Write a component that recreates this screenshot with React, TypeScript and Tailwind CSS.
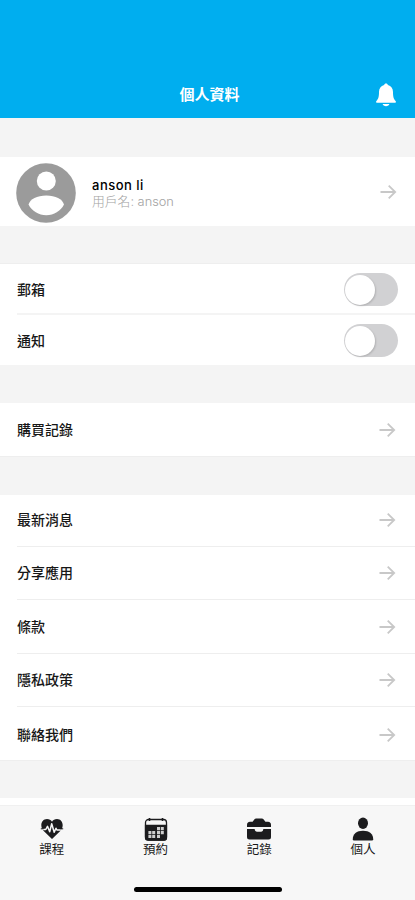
import React from 'react';

const menuItems = [
  { label: '最新消息', row: 'h-[51px] pb-[2px]' },
  { label: '分享應用', row: 'h-[52px]' },
  { label: '條款', row: 'h-[53px]' },
  { label: '隱私政策', row: 'h-[52px]' },
  { label: '聯絡我們', row: 'h-[53px] pt-[2px]' },
];

const ArrowIcon: React.FC = () => (
  <svg width="17" height="16" viewBox="0 0 17 16" fill="none" stroke="#c8c8c8" strokeWidth="1.8">
    <path d="M0.5 8H15M8.7 1.6L15.2 8L8.7 14.4" />
  </svg>
);

const BellIcon: React.FC = () => (
  <svg width="20" height="24" viewBox="0 0 20 24" fill="#fff">
    <path d="M10 .4C8.900.4 8.300 1 8.100 2 4.900 3 3 5.500 3 9c0 4.800-.6 6.800-2.600 9-.7.8-.2 1.800.7 1.800h17.800c.9 0 1.400-1 .7-1.800-2-2.200-2.600-4.200-2.600-9 0-3.500-1.900-6-5.100-7C11.700 1 11.100.4 10 .4z" />
    <path d="M6.600 21h6.800c-.4 1.400-1.700 2.200-3.400 2.200S7 22.400 6.600 21z" />
  </svg>
);

const Avatar: React.FC = () => (
  <svg width="60" height="60" viewBox="0 0 60 60">
    <circle cx="30" cy="30" r="29.800" fill="#9b9b9b" />
    <circle cx="30.300" cy="18" r="9.500" fill="#fff" />
    <path d="M12.500 41.500C14 36 21 32.400 30.300 32.400S46.500 36 48 41.500C44.500 48.200 38 52.200 30.300 52.200S16 48.200 12.500 41.500z" fill="#fff" />
  </svg>
);

const HeartIcon: React.FC = () => (
  <svg width="24" height="22" viewBox="0 0 24 22">
    <path d="M12 21L3.200 12.400C-.5 8 1.500 1 7 1c2.200 0 4 1 5 2.800C13 2 14.800 1 17 1c5.500 0 7.500 7 3.800 11.400z" fill="#1c1c1e" />
    <path d="M0 11.500h5.800l1.700-3.200 2.200 5.500 2-8 2.500 8.500 1.800-4 .9 1.700H24" fill="none" stroke="#f7f7f7" strokeWidth="1.500" strokeLinejoin="round" />
    <path d="M.8 10.800h3M20.200 10.800h3" stroke="#1c1c1e" strokeWidth="1" />
  </svg>
);

const CalendarIcon: React.FC = () => (
  <svg width="24" height="23" viewBox="0 0 24 23">
    <rect x="1.500" y="1.500" width="21" height="20.500" rx="3" fill="#f7f7f7" stroke="#1c1c1e" strokeWidth="1.300" />
    <path d="M.9 6.800h22.200V20a2.700 2.700 0 0 1-2.700 2.700H3.600A2.700 2.700 0 0 1 .9 20z" fill="#1c1c1e" />
    <path d="M5.500 0v3M18.500 0v3" stroke="#1c1c1e" strokeWidth="1.600" />
    <path d="M13 9h3v3.200h-3zM16.800 9h3v3.200h-3zM4.400 13h3v3.200h-3zM8.200 13h3v3.200h-3zM13 13h3v3.200h-3zM16.800 13h3v3.200h-3zM4.400 17h3v3h-3zM8.200 17h3v3h-3zM13 17h3v3h-3z" fill="#cfcfcf" />
  </svg>
);

const BriefcaseIcon: React.FC = () => (
  <svg width="24" height="22" viewBox="0 0 24 22" fill="#1c1c1e">
    <path d="M3 3.700H5.600L7.300 1.500Q8 .5 9.200.5H14.800Q16 .5 16.700 1.500L18.400 3.700H21Q24 3.900 24 6.900V9.100H0V6.900Q0 3.900 3 3.700z" />
    <path d="M0 10.900H7.600Q8 13.800 9.800 13.800H14.200Q16 13.800 16.400 10.900H24V19Q24 21.500 21.500 21.500H2.500Q0 21.500 0 19z" />
  </svg>
);

const PersonIcon: React.FC = () => (
  <svg width="22" height="24" viewBox="0 0 22 24" fill="#1c1c1e">
    <ellipse cx="11" cy="6.300" rx="5" ry="5.700" />
    <path d="M.8 22.200C.8 17 4.500 13.800 11 13.800S21.200 17 21.200 22.200Q21.200 23.400 20 23.400H2Q.8 23.400.8 22.200z" />
  </svg>
);

const tabs = [
  { label: '課程', icon: <HeartIcon /> },
  { label: '預約', icon: <CalendarIcon /> },
  { label: '記錄', icon: <BriefcaseIcon /> },
  { label: '個人', icon: <PersonIcon /> },
];

const Toggle: React.FC = () => (
  <div className="flex h-[33px] w-[54px] items-center rounded-full bg-[#d1d1d3] pl-[1px]">
    <div className="h-[30px] w-[30px] rounded-full bg-white shadow-[1px_1px_2px_rgba(0,0,0,0.15)]" />
  </div>
);

const App: React.FC = () => (
  <div className="flex h-[900px] w-[415px] flex-col overflow-hidden bg-[#f4f4f4] font-['Inter','Noto_Sans_CJK_TC',sans-serif] text-[14px] font-medium leading-none text-[#171717]">
    <header className="grid h-[118px] shrink-0 grid-cols-[1fr_auto_1fr] items-end bg-[#00aeef] text-white">
      <span />
      <h1 className="translate-x-[2px] pb-[15px] text-[15px] font-bold leading-4">個人資料</h1>
      <div className="flex justify-end pr-[19px] pb-[11px]">
        <BellIcon />
      </div>
    </header>

    <section className="mt-[39px] flex h-[69px] shrink-0 items-center bg-white pl-4 pr-[18px]">
      <div className="mt-[2px]"><Avatar /></div>
      <div className="ml-4 flex-1 pt-[3px]">
        <div className="text-[13px] font-medium leading-4 tracking-[0.5px] text-black">anson li</div>
        <div className="text-[12.800px] font-light leading-[17px] text-[#a3a3a3]">用戶名: anson</div>
      </div>
      <ArrowIcon />
    </section>

    <section className="mt-[37px] h-[102px] shrink-0 border-t border-[#eeeeee] bg-white pl-[17px]">
      <div className="flex h-[51px] items-center justify-between border-b-2 border-[#f4f4f4] pt-[2px] pr-[17px]">
        <span>郵箱</span>
        <Toggle />
      </div>
      <div className="flex h-[50px] items-center justify-between pt-[1px] pr-[17px]">
        <span>通知</span>
        <Toggle />
      </div>
    </section>

    <section className="mt-[38px] flex h-[54px] shrink-0 items-center justify-between border-b border-[#eeeeee] bg-white pl-[17px] pr-[19px]">
      <span>購買記錄</span>
      <ArrowIcon />
    </section>

    <section className="mt-[38px] shrink-0 border-b border-[#eeeeee] bg-white pl-[17px]">
      {menuItems.map((item, i) => (
        <div key={item.label} className={i > 0 ? 'border-t border-[#eeeeee]' : ''}>
          <div className={`flex items-center justify-between pr-[19px] ${item.row}`}>
            <span>{item.label}</span>
            <ArrowIcon />
          </div>
        </div>
      ))}
    </section>

    <div className="mt-auto h-[7px] shrink-0 bg-white" />
    <nav className="flex h-[95px] shrink-0 flex-col items-center border-t border-[#f0f0f0] bg-[#f7f7f7]">
      <div className="grid w-full grid-cols-4 pt-[11px]">
        {tabs.map((tab) => (
          <div key={tab.label} className="flex flex-col items-center">
            <div className="flex h-6 items-center">{tab.icon}</div>
            <span className="mt-px text-[12.500px] font-normal leading-4">{tab.label}</span>
          </div>
        ))}
      </div>
      <div className="mt-auto mb-2 h-[5px] w-[148px] rounded-full bg-black" />
    </nav>
  </div>
);

export default App;
